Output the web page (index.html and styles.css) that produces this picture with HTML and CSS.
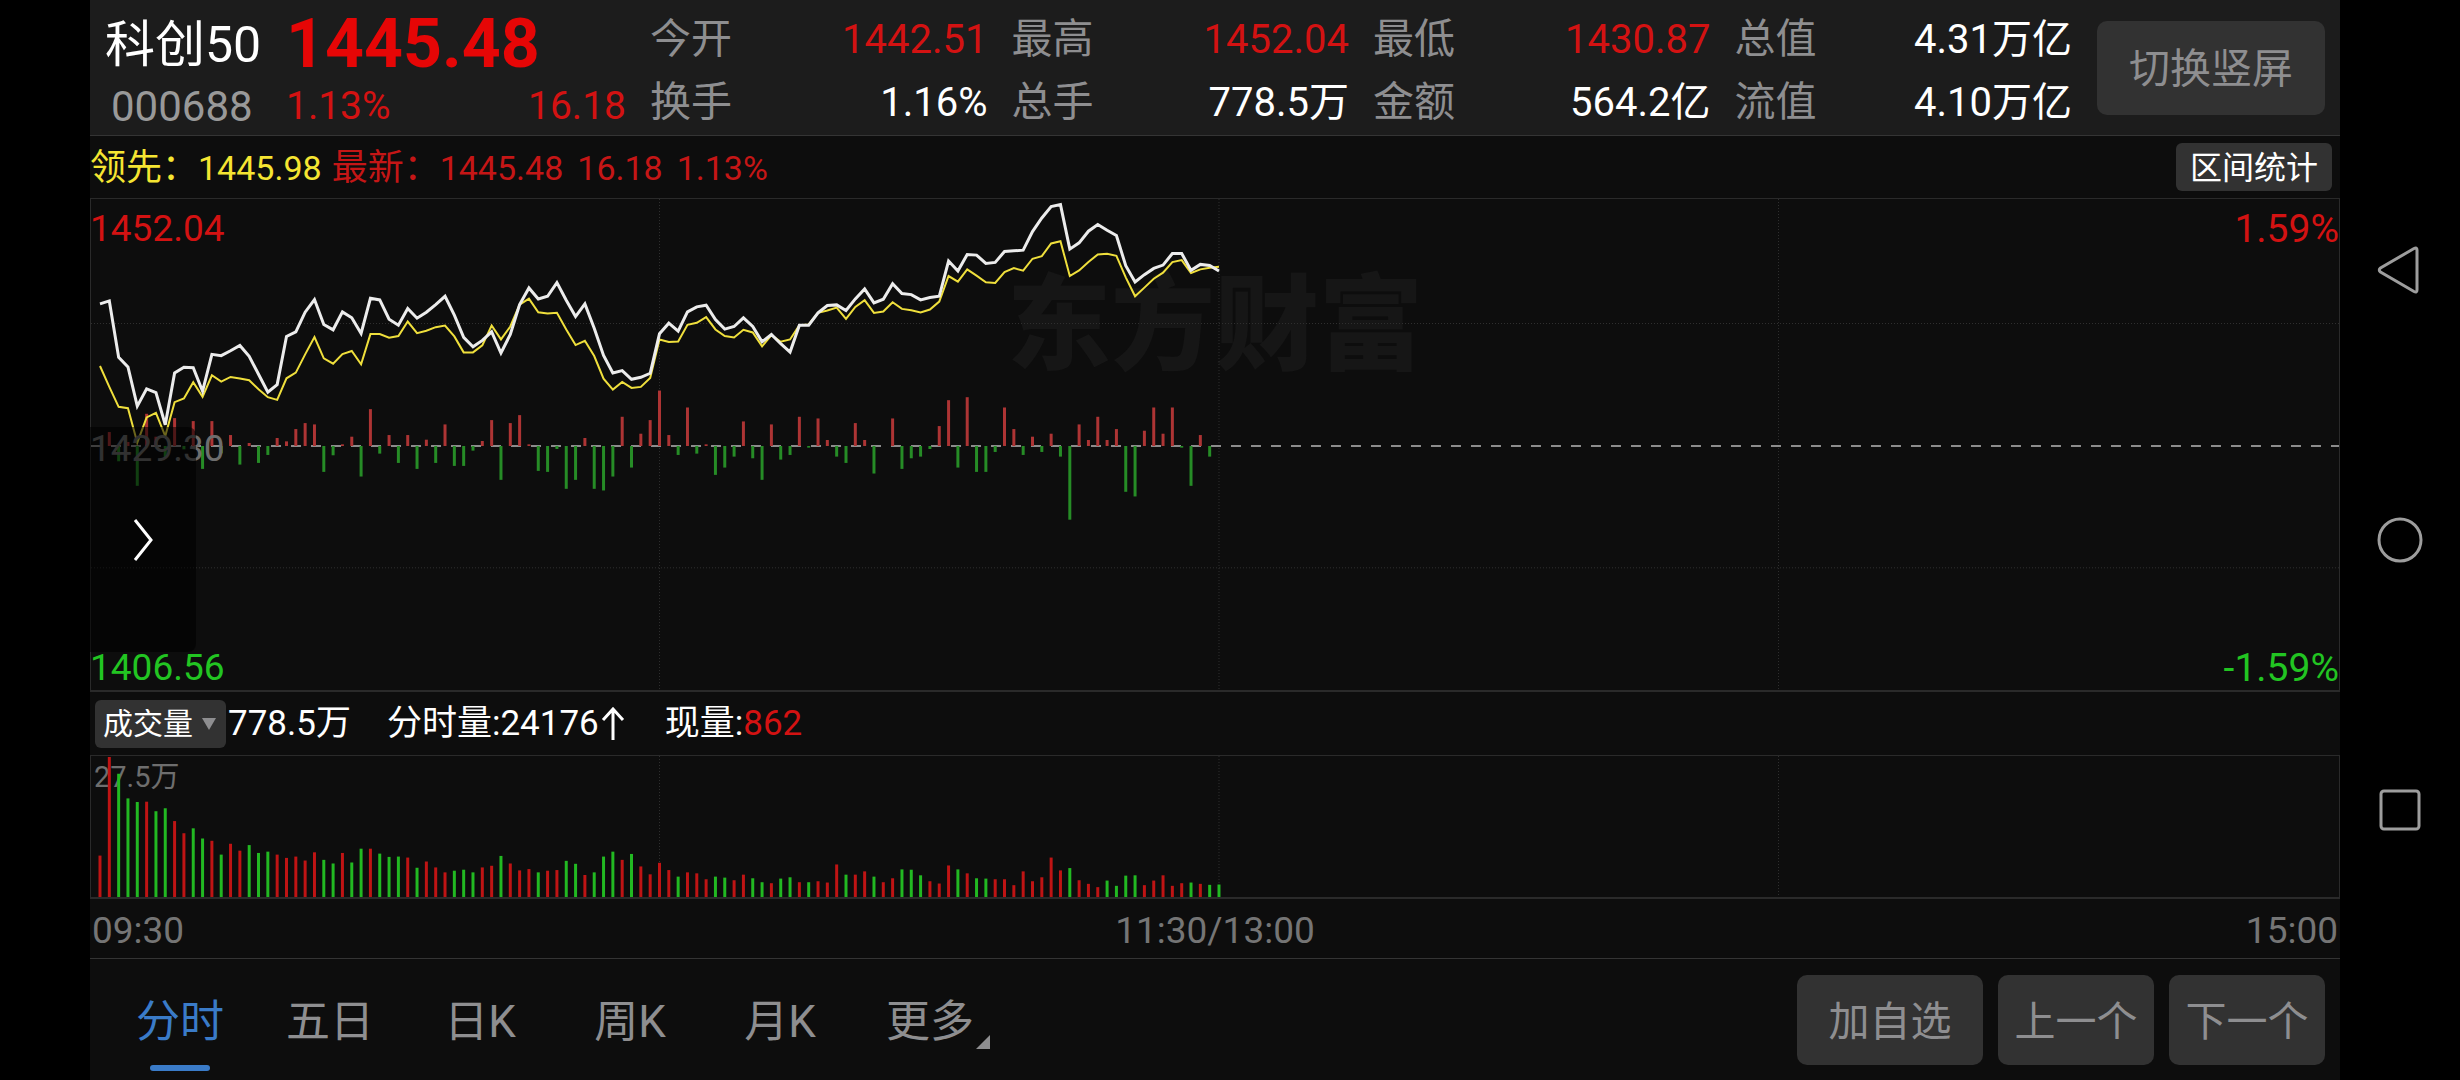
FILE: index.html
```html
<!DOCTYPE html>
<html lang="zh-CN">
<head>
<meta charset="utf-8">
<meta name="viewport" content="width=device-width, initial-scale=1">
<title>科创50 000688</title>
<link rel="stylesheet" href="styles.css">
</head>
<body>
<main class="app">
  <header class="quote">
    <div class="ident">
      <h1 class="name">科创50</h1>
      <span class="code">000688</span>
    </div>
    <div class="last">
      <strong class="price">1445.48</strong>
      <div class="change"><span>1.13%</span><span>16.18</span></div>
    </div>
    <dl class="stats">
      <div class="stat"><dt>今开</dt><dd class="up">1442.51</dd></div>
      <div class="stat"><dt>最高</dt><dd class="up">1452.04</dd></div>
      <div class="stat"><dt>最低</dt><dd class="up">1430.87</dd></div>
      <div class="stat"><dt>总值</dt><dd>4.31万亿</dd></div>
      <div class="stat"><dt>换手</dt><dd>1.16%</dd></div>
      <div class="stat"><dt>总手</dt><dd>778.5万</dd></div>
      <div class="stat"><dt>金额</dt><dd>564.2亿</dd></div>
      <div class="stat"><dt>流值</dt><dd>4.10万亿</dd></div>
    </dl>
    <button class="btn rotate" type="button">切换竖屏</button>
  </header>

  <div class="legend">
    <span class="lead">领先：<span class="num">1445.98</span></span>
    <span class="newest">最新：<span class="num">1445.48</span></span>
    <span class="newest num">16.18</span>
    <span class="newest num">1.13%</span>
    <button class="range" type="button">区间统计</button>
  </div>

  <section class="chart price-chart" aria-label="分时走势">
    <div class="watermark" aria-hidden="true">东方财富</div>
    <svg class="plot" id="price" viewBox="0 24 2250 1479" preserveAspectRatio="none" aria-hidden="true"></svg>
    <span class="tick top-left up">1452.04</span>
    <span class="tick top-right up">1.59%</span>
    <span class="tick mid-left">1429.30</span>
    <span class="tick bottom-left down">1406.56</span>
    <span class="tick bottom-right down">-1.59%</span>
    <button class="drawer" type="button" aria-label="展开">
      <svg width="24" height="44" viewBox="0 0 24 44"><path d="M4 2 L20 22 L4 42" fill="none" stroke="#fff" stroke-width="3"/></svg>
    </button>
  </section>

  <div class="volume-bar">
    <label class="picker">
      <select aria-label="指标"><option>成交量</option></select>
      <svg width="14" height="12" viewBox="0 0 14 12"><path d="M0 0H14L7 12Z" fill="#8e8e90"/></svg>
    </label>
    <span class="total">778.5万</span>
    <span class="minute">分时量:24176<svg width="24" height="34" viewBox="0 0 24 34"><path d="M12 33V2M2 13L12 2L22 13" fill="none" stroke="#fff" stroke-width="3"/></svg></span>
    <span class="current">现量:<span class="up">862</span></span>
  </div>

  <section class="chart volume-chart" aria-label="成交量">
    <span class="peak">27.5万</span>
    <svg class="plot" id="volume" viewBox="0 0 2250 429" preserveAspectRatio="none" aria-hidden="true"></svg>
  </section>

  <div class="times"><span>09:30</span><span>11:30/13:00</span><span>15:00</span></div>

  <footer class="toolbar">
    <nav class="tabs">
      <button class="tab active" type="button">分时</button>
      <button class="tab" type="button">五日</button>
      <button class="tab" type="button">日K</button>
      <button class="tab" type="button">周K</button>
      <button class="tab" type="button">月K</button>
      <button class="tab more" type="button">更多</button>
    </nav>
    <div class="actions">
      <button class="btn wide" type="button">加自选</button>
      <button class="btn" type="button">上一个</button>
      <button class="btn" type="button">下一个</button>
    </div>
  </footer>
</main>

<aside class="system">
  <button type="button" aria-label="返回"><svg width="48" height="48" viewBox="0 0 48 48"><path d="M38 2.500Q41 1 41 4V44Q41 47 38 45.500L4.500 26Q2 24 4.500 22Z"/></svg></button>
  <button type="button" aria-label="主页"><svg width="48" height="48" viewBox="0 0 48 48"><circle cx="24" cy="24" r="21"/></svg></button>
  <button type="button" aria-label="最近任务"><svg width="48" height="48" viewBox="0 0 48 48"><rect x="5" y="5" width="38" height="38" rx="3"/></svg></button>
</aside>
<script src="chart.js"></script>
</body>
</html>
```

FILE: styles.css
```css
* {
  box-sizing: border-box;
}

body {
  margin: 0;
  min-height: 100vh;
  display: grid;
  grid-template-columns: 90px minmax(0, 1fr) 120px;
  background: #000;
  color: #fff;
  font-family: Roboto, "Noto Sans CJK SC", sans-serif;
  font-size: 41px;
  line-height: 1;
}

button,
select {
  margin: 0;
  padding: 0;
  border: 0;
  background: none;
  color: inherit;
  font: inherit;
}

.app {
  grid-column: 2;
  display: flex;
  flex-direction: column;
  background: #0d0d0d;
}

.up {
  color: #d31212;
}

.down {
  color: #22c522;
}

/* quote header */

.quote {
  display: flex;
  align-items: center;
  height: 136px;
  padding: 0 15px;
  background: #1c1c1c;
  border-bottom: 1px solid #343434;
}

.ident {
  width: 181px;
  padding-top: 12px;
}

.name {
  margin: 0 0 18px;
  font-size: 50px;
  font-weight: 400;
  line-height: 48px;
}

.code {
  display: block;
  padding-left: 6px;
  color: #999;
  font-size: 42px;
  line-height: 40px;
}

.last {
  width: 340px;
  padding-top: 8px;
  color: #e60606;
}

.price {
  display: block;
  margin-bottom: 14px;
  font-size: 68px;
  line-height: 54px;
}

.change {
  display: flex;
  justify-content: space-between;
  color: #d31212;
  font-size: 39px;
  line-height: 42px;
}

.stats {
  flex: 1;
  display: grid;
  grid-template-columns: repeat(4, 1fr);
  gap: 22px 24px;
  margin: 0 25px 0 24px;
  padding-top: 6px;
}

.stat {
  display: flex;
  justify-content: space-between;
  line-height: 41px;
}

.stat dd {
  margin: 0;
  font-size: 40px;
}

.stat dt {
  color: #8e8e90;
}

.btn {
  width: 156px;
  height: 90px;
  padding-top: 4px;
  border-radius: 10px;
  background: #323232;
  color: #8e8e90;
}

.btn.wide {
  width: 186px;
}

.btn.rotate {
  width: 228px;
  height: 94px;
}

/* legend row */

.legend {
  display: flex;
  align-items: center;
  gap: 14px;
  height: 62px;
  padding-right: 8px;
  font-size: 36px;
}

.legend > span {
  padding-top: 2px;
}

.num {
  font-size: 34px;
}

.lead {
  margin-right: -4px;
  color: #f5e532;
}

.newest {
  color: #c51616;
}

.range {
  width: 156px;
  height: 48px;
  margin-left: auto;
  padding-top: 2px;
  border-radius: 6px;
  background: #323232;
  font-size: 32px;
}

/* charts */

.chart {
  position: relative;
  border: 1px solid #2a2a2a;
}

.price-chart {
  flex: 491 1 0;
  min-height: 360px;
  border-bottom-width: 2px;
}

.volume-chart {
  flex: 141 1 0;
  min-height: 100px;
  border-bottom-width: 2px;
}

.plot {
  position: absolute;
  inset: 0;
  width: 100%;
  height: 100%;
}

.plot line,
.plot polyline {
  fill: none;
  vector-effect: non-scaling-stroke;
}

.grid {
  stroke: #303030;
  stroke-width: 1;
  stroke-dasharray: 1 2;
}

.baseline {
  stroke: #8c8c8c;
  stroke-width: 2;
  stroke-dasharray: 10 10;
}

.bar {
  stroke-width: 3;
}

.bar.rise {
  stroke: #ad3434;
}

.bar.fall {
  stroke: #268c26;
}

.volume-chart .rise {
  stroke: #bf1414;
}

.volume-chart .fall {
  stroke: #22b922;
}

.line-price {
  stroke: #ececec;
  stroke-width: 3;
}

.line-lead {
  stroke: #efdf3c;
  stroke-width: 2;
}

.watermark {
  position: absolute;
  top: 26%;
  left: 50%;
  transform: translate(-50%, -50%);
  color: #161616;
  font-size: 104px;
  font-weight: 900;
  white-space: nowrap;
}

.tick {
  position: absolute;
  font-size: 37px;
  line-height: 40px;
}

.top-left {
  top: 10px;
  left: -1px;
}

.top-right {
  top: 10px;
  right: 0;
  font-size: 39px;
}

.mid-left {
  top: 50%;
  left: -1px;
  margin-top: -16px;
  color: #6e6e6e;
}

.bottom-left {
  bottom: 2px;
  left: -1px;
}

.bottom-right {
  right: 0;
  bottom: 2px;
  font-size: 39px;
}

.drawer {
  position: absolute;
  top: 228px;
  bottom: 38px;
  left: -1px;
  width: 106px;
  padding-top: 8px;
  border-radius: 0 8px 8px 0;
  background: rgba(0, 0, 0, 0.55);
}

/* volume */

.volume-bar {
  display: flex;
  align-items: center;
  height: 63px;
  padding-left: 5px;
  font-size: 35px;
}

.picker {
  display: flex;
  align-items: center;
  justify-content: space-between;
  width: 131px;
  height: 48px;
  padding: 0 10px 0 8px;
  border-radius: 6px;
  background: #323232;
}

.picker select {
  appearance: none;
  width: 92px;
  height: 48px;
  font-size: 30px;
}

.total {
  margin: 0 36px 0 2px;
}

.minute {
  display: flex;
  align-items: center;
  gap: 2px;
  margin-right: 40px;
}

.peak {
  position: absolute;
  top: 7px;
  left: 3px;
  color: #6e6e6e;
  font-size: 29px;
}

.times {
  display: grid;
  grid-template-columns: 1fr auto 1fr;
  align-items: center;
  height: 60px;
  padding: 4px 2px 0;
  border-bottom: 1px solid #343434;
  color: #757575;
  font-size: 37px;
}

.times span:last-child {
  text-align: right;
}

/* bottom toolbar */

.toolbar {
  display: flex;
  align-items: center;
  justify-content: space-between;
  height: 121px;
  padding: 1px 15px 0;
}

.tabs {
  display: flex;
}

.tab {
  position: relative;
  width: 150px;
  height: 120px;
  padding-top: 4px;
  color: #8e8e90;
  font-size: 44px;
}

.tab.active {
  color: #3a7bc8;
}

.tab.active::after {
  content: "";
  position: absolute;
  bottom: 9px;
  left: 45px;
  width: 60px;
  height: 6px;
  border-radius: 3px;
  background: #3a7bc8;
}

.tab.more::after {
  content: "";
  position: absolute;
  right: 15px;
  bottom: 31px;
  border-bottom: 14px solid #8e8e90;
  border-left: 14px solid transparent;
}

.actions {
  display: flex;
  gap: 15px;
}

/* system navigation */

.system {
  grid-column: 3;
  display: flex;
  flex-direction: column;
  align-items: center;
  justify-content: center;
  gap: 222px;
}

.system button {
  height: 48px;
}

.system svg {
  display: block;
  fill: none;
  stroke: #9d9d9d;
  stroke-width: 3;
}
```

FILE: chart.js
```js
// One sample per minute; the session has 241 slots, 121 of them traded so far.
const STEP = 28 / 3;
const FIRST = 9;
const BASE = 768;

const price = [
  340, 331, 501, 530, 648, 596, 607, 704, 548, 531, 532, 603, 492, 496, 481, 465, 498, 552, 606, 583,
  438, 424, 365, 327, 402, 418, 364, 382, 429, 323, 328, 386, 404, 354, 383, 365, 342, 317, 374, 441,
  469, 450, 424, 488, 432, 342, 292, 325, 317, 276, 329, 378, 340, 413, 495, 548, 541, 567, 561, 549,
  430, 398, 422, 364, 349, 344, 387, 416, 408, 382, 408, 454, 432, 460, 485, 404, 404, 367, 345, 343,
  360, 325, 295, 337, 326, 279, 309, 312, 328, 321, 317, 211, 241, 191, 193, 218, 215, 182, 180, 178,
  122, 81, 47, 41, 175, 156, 121, 101, 118, 134, 225, 274, 252, 233, 223, 188, 188, 239, 221, 224, 241
];

const lead = [
  527, 590, 650, 654, 758, 682, 668, 738, 636, 625, 576, 620, 555, 574, 560, 565, 570, 597, 621, 629,
  564, 547, 492, 440, 504, 520, 491, 482, 522, 431, 431, 442, 437, 393, 428, 421, 410, 405, 438, 486,
  486, 465, 405, 447, 408, 342, 324, 365, 369, 367, 417, 464, 451, 497, 565, 598, 575, 593, 590, 563,
  447, 455, 453, 403, 397, 380, 417, 437, 441, 418, 426, 468, 434, 454, 447, 404, 402, 367, 360, 351,
  385, 349, 329, 367, 363, 335, 355, 359, 366, 357, 333, 256, 273, 236, 255, 275, 277, 244, 232, 240,
  204, 196, 158, 151, 256, 239, 214, 191, 189, 195, 260, 317, 291, 264, 246, 214, 208, 247, 236, 231, 228
];

const momentum = [
  0, 42, -46, 12, -120, 97, 28, -37, 84, -10, 75, -69, 75, -22, 33, -56, 9, -51, -27, 24,
  14, 51, 69, 65, -78, -28, 5, 28, -92, 111, -23, 33, -51, 33, -69, 19, -51, 65, -60, -60,
  -14, 15, 78, -102, 69, 93, 5, -75, -78, -9, -129, -102, 24, -129, -134, -92, 88, -65, 37, 78,
  167, 33, -27, 116, -23, 5, -87, -65, -32, 74, -37, -102, 65, -41, -27, 88, -5, 83, 18, -32,
  -51, 69, 18, -83, 0, 83, -69, -37, -32, -9, 60, 138, -65, 147, -78, -78, -18, 116, 51, -27,
  28, -18, 37, -32, -222, 65, 18, 88, 18, 51, -138, -152, 46, 116, 37, 116, -5, -120, 33, -32, 0
];

// Volume per minute; a negative value is a minute that closed lower.
const volume = [
  126, 426, -375, -300, -289, 290, -261, -270, 231, 194, -209, -178, 171, -129, 162, 141, -158, -134, -138, 129,
  119, 123, 111, 136, -113, -102, 134, -105, -147, 147, -132, -122, -123, 120, -89, 108, 90, 75, -80, -83,
  -75, 90, 95, -125, 102, 81, 85, -75, 80, 82, -110, -101, 67, -75, -123, -138, 113, -131, 93, 69,
  104, 82, -62, 75, 72, 54, -62, -59, 51, 68, -57, -45, 42, -56, -60, 45, -45, 48, 44, 99,
  -68, 68, 78, -62, 45, 57, -84, -83, -66, 48, 41, 96, -84, 72, -57, -56, 54, 54, 36, 78,
  48, 60, 120, 81, -88, 51, 40, 30, -50, -34, -65, -66, 36, 50, 66, 34, 42, -44, 40, -37, -38
];

const x = i => (FIRST + i * STEP).toFixed(2);
const line = (cls, x1, y1, x2, y2) =>
  `<line class="${cls}" x1="${x1}" y1="${y1}" x2="${x2}" y2="${y2}"/>`;
const poly = (cls, data) =>
  `<polyline class="${cls}" points="${data.map((v, i) => x(i) + "," + v).join(" ")}"/>`;
const columns = (top, bottom) =>
  [60, 120, 180].map(i => line("grid", x(i), top, x(i), bottom)).join("");

document.getElementById("price").innerHTML =
  columns(24, 1503) +
  line("grid", 0, 399, 2250, 399) +
  line("grid", 0, 1135, 2250, 1135) +
  line("baseline", 0, BASE, 2250, BASE) +
  momentum.map((v, i) => v ? line("bar " + (v > 0 ? "rise" : "fall"), x(i), BASE, x(i), BASE - v) : "").join("") +
  poly("line-lead", lead) +
  poly("line-price", price);

document.getElementById("volume").innerHTML =
  columns(0, 429) +
  volume.map((v, i) => line("bar " + (v > 0 ? "rise" : "fall"), x(i), 429, x(i), 429 - Math.abs(v))).join("");
```
